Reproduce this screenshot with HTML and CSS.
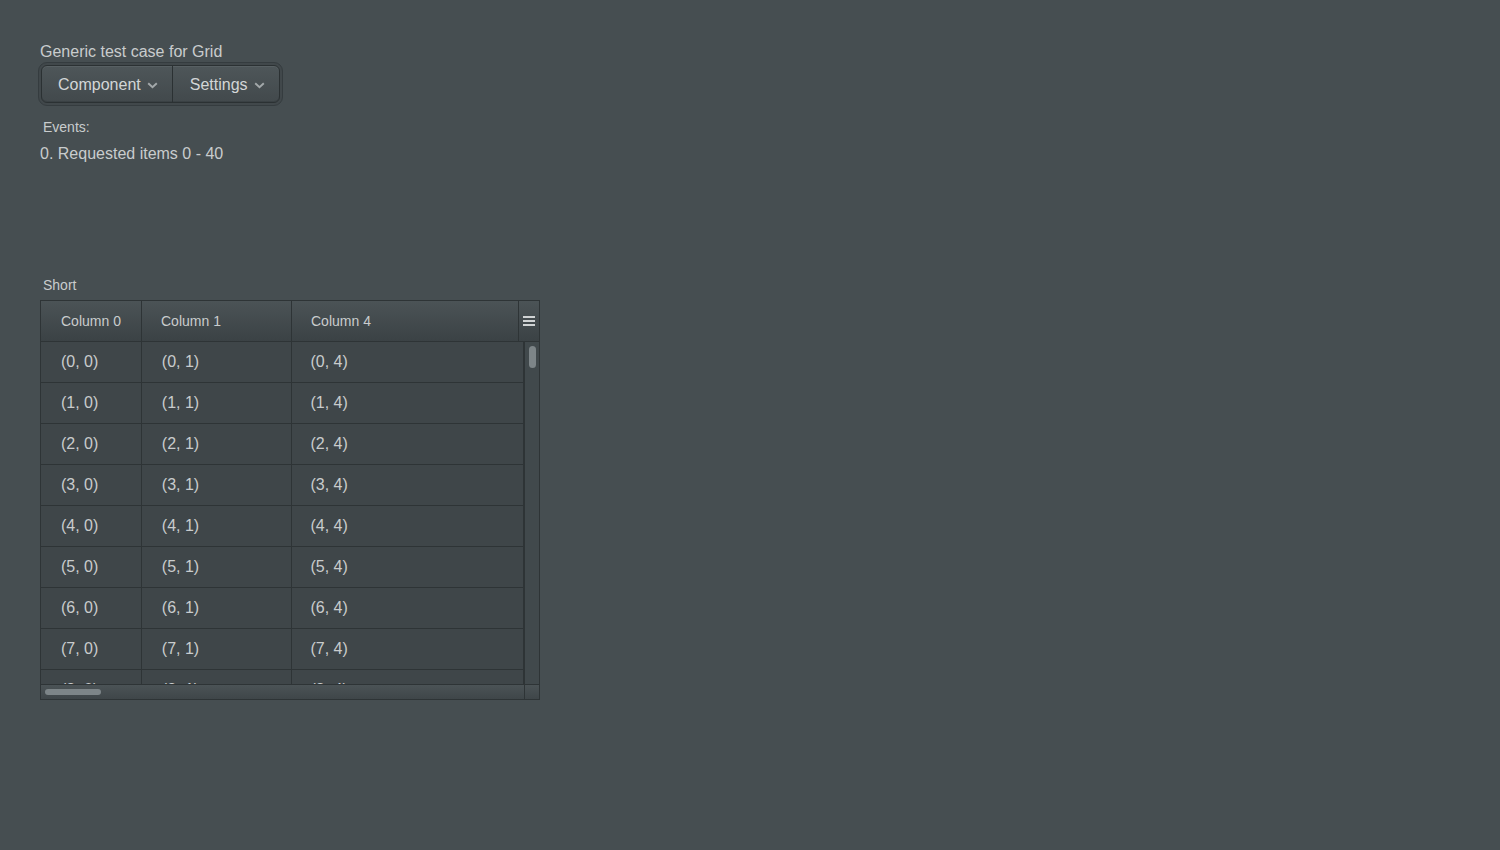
FILE: index.html
```html
<!DOCTYPE html>
<html>
<head>
<meta charset="utf-8">
<link rel="stylesheet" href="styles.css">
</head>
<body>
<div class="page">
  <div class="title">Generic test case for Grid</div>
  <div class="menu-ring">
    <div class="menubar">
      <div class="menu-item">Component <span class="chev"><svg width="11" height="7" viewBox="0 0 11 7"><path d="M1.2 1.2 L5.5 5.3 L9.8 1.2" fill="none" stroke="#a3a8aa" stroke-width="1.9"/></svg></span></div>
      <div class="menu-item">Settings <span class="chev"><svg width="11" height="7" viewBox="0 0 11 7"><path d="M1.2 1.2 L5.5 5.3 L9.8 1.2" fill="none" stroke="#a3a8aa" stroke-width="1.9"/></svg></span></div>
    </div>
  </div>
  <div class="events-caption">Events:</div>
  <div class="events-log">0. Requested items 0 - 40</div>

  <div class="grid-caption">Short</div>
  <div class="grid">
    <div class="grid-head">
      <div class="hcell c0">Column 0</div>
      <div class="hcell c1">Column 1</div>
      <div class="hcell c4">Column 4</div>
      <div class="sidebar-btn"><svg width="12" height="10" viewBox="0 0 12 10"><rect x="0" y="0" width="12" height="2" fill="#d0d3d4"/><rect x="0" y="4" width="12" height="2" fill="#d0d3d4"/><rect x="0" y="8" width="12" height="2" fill="#d0d3d4"/></svg></div>
    </div>
    <div class="grid-mid">
      <div class="grid-body">
        <div class="row"><div class="cell c0">(0, 0)</div><div class="cell c1">(0, 1)</div><div class="cell c4">(0, 4)</div></div>
        <div class="row"><div class="cell c0">(1, 0)</div><div class="cell c1">(1, 1)</div><div class="cell c4">(1, 4)</div></div>
        <div class="row"><div class="cell c0">(2, 0)</div><div class="cell c1">(2, 1)</div><div class="cell c4">(2, 4)</div></div>
        <div class="row"><div class="cell c0">(3, 0)</div><div class="cell c1">(3, 1)</div><div class="cell c4">(3, 4)</div></div>
        <div class="row"><div class="cell c0">(4, 0)</div><div class="cell c1">(4, 1)</div><div class="cell c4">(4, 4)</div></div>
        <div class="row"><div class="cell c0">(5, 0)</div><div class="cell c1">(5, 1)</div><div class="cell c4">(5, 4)</div></div>
        <div class="row"><div class="cell c0">(6, 0)</div><div class="cell c1">(6, 1)</div><div class="cell c4">(6, 4)</div></div>
        <div class="row"><div class="cell c0">(7, 0)</div><div class="cell c1">(7, 1)</div><div class="cell c4">(7, 4)</div></div>
        <div class="row"><div class="cell c0">(8, 0)</div><div class="cell c1">(8, 1)</div><div class="cell c4">(8, 4)</div></div>
      </div>
      <div class="vscroll"><div class="vthumb"></div></div>
    </div>
    <div class="grid-foot">
      <div class="hscroll"><div class="hthumb"></div></div>
      <div class="corner"></div>
    </div>
  </div>
</div>
</body>
</html>
```

FILE: styles.css
```css
html, body {
  margin: 0;
  padding: 0;
  background: #464e51;
  height: 100%;
}
.page {
  font-family: "Liberation Sans", Arial, sans-serif;
  color: #c9cccd;
  padding: 42px 40px 0 40px;
  display: flex;
  flex-direction: column;
  align-items: flex-start;
}
.title {
  font-size: 16px;
  line-height: 19px;
}
.menu-ring {
  margin-top: 1px;
  margin-left: -2px;
  padding: 2px;
  border: 1px solid #353c3f;
  border-radius: 9px;
  background: #41484b;
}
.menubar {
  display: flex;
  border: 1px solid #2b3133;
  border-radius: 6px;
  overflow: hidden;
  background: linear-gradient(#4e5659, #42494c);
  box-shadow: inset 0 1px 0 #586063, inset 0 -1px 0 #3a4144;
}
.menu-item {
  box-sizing: border-box;
  height: 36px;
  display: flex;
  align-items: center;
  padding: 1px 14px 0 16px;
  font-size: 16px;
  color: #d3d6d7;
}
.menu-item + .menu-item {
  border-left: 1px solid #2b3133;
  padding-left: 17px;
  padding-right: 14px;
}
.chev {
  display: inline-flex;
  margin-left: 6px;
  margin-top: 2px;
}
.events-caption {
  margin-top: 13px;
  margin-left: 3px;
  font-size: 14px;
  line-height: 17px;
}
.events-log {
  margin-top: 8px;
  font-size: 16px;
  line-height: 19px;
}
.grid-caption {
  margin-top: 114px;
  margin-left: 3px;
  font-size: 14px;
  line-height: 17px;
}
.grid {
  margin-top: 6px;
  width: 498px;
  border: 1px solid #2e3436;
  background: #3f4649;
  display: flex;
  flex-direction: column;
}
.grid-head {
  display: flex;
  height: 40px;
  border-bottom: 1px solid #2e3436;
  background: linear-gradient(#4b5356, #3b4245);
  font-size: 14px;
}
.hcell, .cell {
  box-sizing: border-box;
  display: flex;
  align-items: center;
  padding-left: 20px;
  border-right: 1px solid #2e3436;
  white-space: nowrap;
}
.hcell.c1, .hcell.c4, .cell.c4 { padding-left: 19px; }
.c0 { width: 101px; }
.c1 { width: 150px; }
.hcell.c4 { width: 227px; }
.cell.c4 { width: 233px; }
.sidebar-btn {
  flex: 1;
  display: flex;
  align-items: center;
  justify-content: center;
}
.grid-mid {
  display: flex;
  height: 342px;
  overflow: hidden;
}
.grid-body {
  width: 483px;
  display: flex;
  flex-direction: column;
  overflow: hidden;
}
.row {
  display: flex;
  flex: none;
  height: 40px;
  border-bottom: 1px solid #2e3436;
  font-size: 16px;
  background: #3f4649;
}
.vscroll {
  flex: 1;
  border-left: 1px solid #2e3436;
  background: #41494c;
  display: flex;
  justify-content: center;
  padding-top: 4px;
}
.vthumb {
  width: 7px;
  height: 22px;
  border-radius: 4px;
  background: #7d8588;
}
.grid-foot {
  display: flex;
  height: 14px;
  border-top: 1px solid #2e3436;
  background: linear-gradient(#4b5356, #3f4649);
}
.hscroll {
  box-sizing: border-box;
  width: 483px;
  padding-left: 4px;
  display: flex;
  align-items: center;
}
.hthumb {
  width: 56px;
  height: 6px;
  border-radius: 3px;
  background: #7d8588;
}
.corner {
  flex: 1;
  border-left: 1px solid #2e3436;
}
```
